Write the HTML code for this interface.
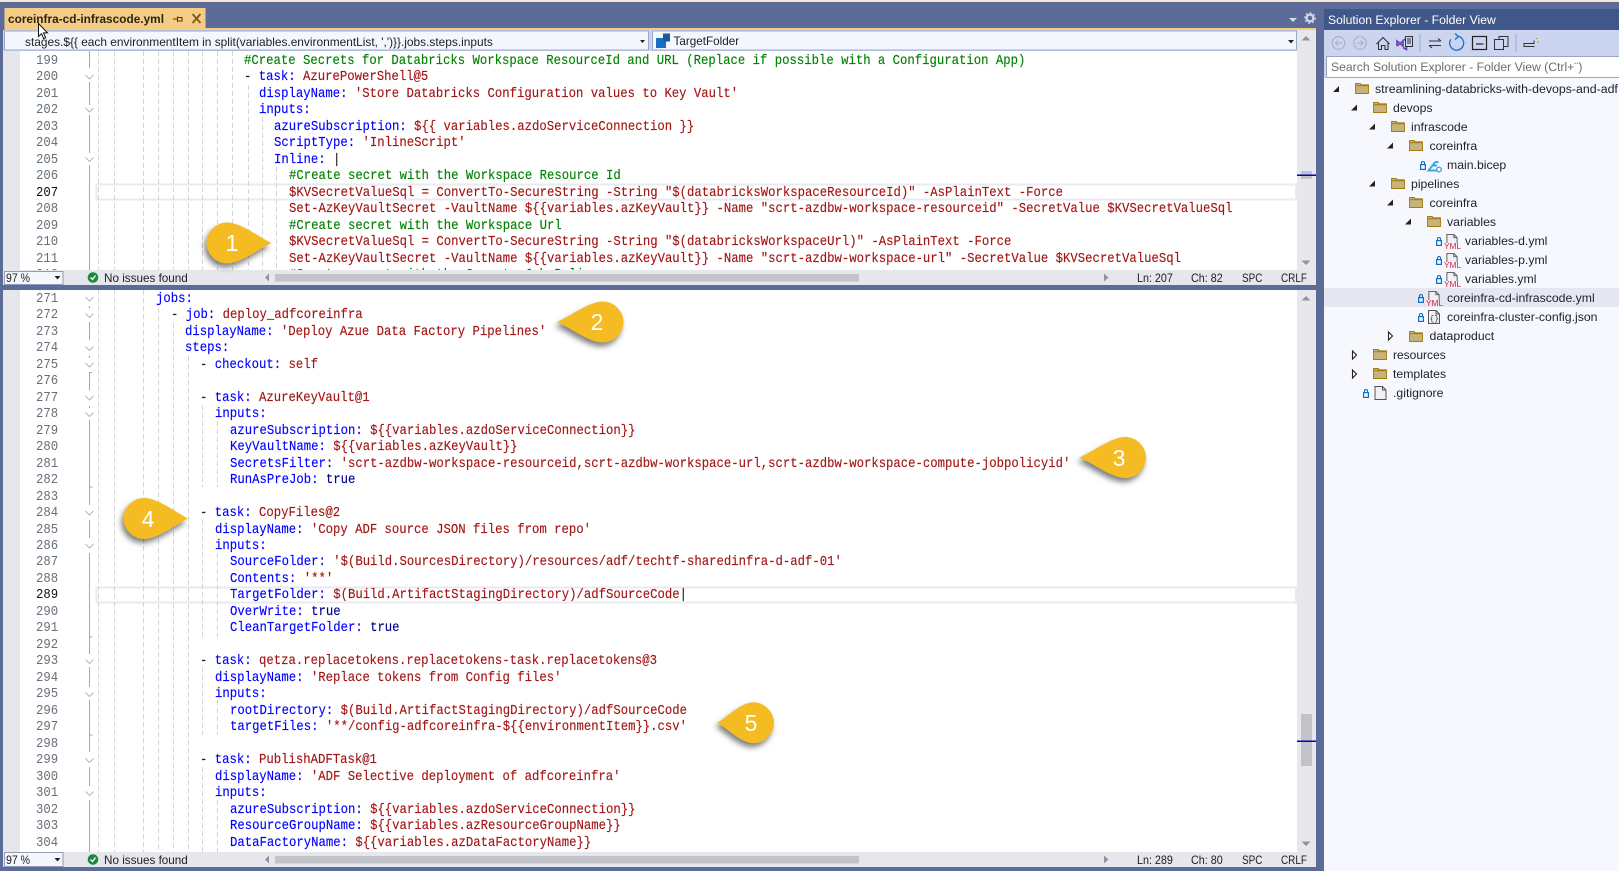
<!DOCTYPE html>
<html><head><meta charset="utf-8"><title>coreinfra-cd-infrascode.yml</title>
<style>
html,body{margin:0;padding:0}
body{width:1619px;height:871px;overflow:hidden;position:relative;background:#5D6B99;font-family:"Liberation Sans",sans-serif;color:#1e1e1e}
div,span.a{position:absolute}
.t{position:absolute;white-space:pre;font-size:12px;line-height:16px}
.st{font-size:11.7px;transform-origin:0 0;z-index:1}
.pane{position:absolute;left:0;width:1297px;overflow:hidden}
.l,.n{position:absolute;white-space:pre;font:14px/16px "Liberation Mono",monospace;top:calc(var(--b) + var(--n)*16.48px);-webkit-text-stroke:.15px}
.l{transform:scaleX(.8774);transform-origin:0 0}
.n{left:36.4px;color:#66707a;transform:scaleX(.8774);transform-origin:0 0;-webkit-text-stroke:0}
.k{color:#0000ff}.v{color:#a31515}.g{color:#008000}.d{color:#222}.b{color:#00008b}
.c0{left:156px}.c1{left:170.7px}.c2{left:185.4px}.c3{left:200.2px}.c4{left:214.9px}.c5{left:229.6px}.c6{left:244.3px}.c7{left:259.1px}.c8{left:273.8px}.c9{left:288.5px}
.ts{font-size:12.25px;color:#1e1e2e}
.y{position:absolute;font:8.3px/7px "Liberation Sans",sans-serif;color:#cf2342;background:#f6f8fe;padding:0 .5px;z-index:2}
.lb{position:absolute;color:#fff;font:23px/24px "Liberation Sans",sans-serif;width:24px;text-align:center}
svg{position:absolute;left:0;top:0;overflow:visible}
</style></head><body>
<svg width="1619" height="871" viewBox="0 0 1619 871" style="z-index:0">
<defs>
<symbol id="fo" viewBox="0 0 15 12" overflow="visible"><path d="M.5 11.5V.5h5l1.200 1.500h7.800v9.500z" fill="#c9b37c" stroke="#9b7400"/><path d="M1 3h13" stroke="#9b7400" stroke-width="1"/></symbol>
<symbol id="lk" viewBox="0 0 6 9" overflow="visible"><rect x=".6" y="3.600" width="4.800" height="4.800" fill="none" stroke="#0a6fc9" stroke-width="1.200"/><path d="M1.500 3.500V2a1.500 1.500 0 0 1 3 0v1.500" fill="none" stroke="#0a6fc9" stroke-width="1.100"/></symbol>
<symbol id="dc" viewBox="0 0 12 14" overflow="visible"><path d="M.5.5h7.500l3.500 3.500v9.500H.5z" fill="#f1f1f5" stroke="#555"/><path d="M8 .5v3.500h3.500" fill="none" stroke="#555"/></symbol>
</defs>
<!-- top strip -->
<rect x="0" y="0" width="1619" height="2" fill="#f6e9cf"/>
<!-- tab -->
<rect x="4.500" y="8" width="201" height="20" fill="#f5cc84"/>
<rect x="4.500" y="28" width="1311.500" height="2" fill="#f5cc84"/>
<path d="M173 19h4M177.500 16.500v5.500M177.500 17.500h4.500v3.500h-4.500" fill="none" stroke="#5a3a10" stroke-width="1.100"/>
<path d="M192.500 14l8 9M200.500 14l-8 9" stroke="#7a5a20" stroke-width="1.800"/>
<path d="M1289 18h8l-4 4z" fill="#d5d9e8"/>
<!-- gear -->
<circle cx="1310" cy="18" r="3.400" fill="none" stroke="#d5d9e8" stroke-width="2.200"/>
<circle cx="1310" cy="18" r="5.200" fill="none" stroke="#d5d9e8" stroke-width="1.400" stroke-dasharray="1.800 2.200"/>
<!-- navigation bar -->
<rect x="3" y="30" width="1313" height="21" fill="#ccd5f0"/>
<rect x="4.500" y="31" width="644" height="19" fill="#f5f7fe" stroke="#9aa8c8"/>
<rect x="652.500" y="31" width="644" height="19" fill="#f5f7fe" stroke="#9aa8c8"/>
<path d="M640 40h5l-2.500 3z" fill="#222"/>
<path d="M1288 40h6l-3 3.500z" fill="#222"/>
<rect x="656" y="38" width="10" height="10" fill="#1a6fc4"/><rect x="663" y="33.500" width="7" height="8" fill="#1a5a9e"/>
<!-- editor bodies -->
<rect x="3" y="51" width="17" height="219" fill="#e6e7ed"/>
<rect x="20" y="51" width="1277" height="219" fill="#fff"/>
<rect x="3" y="290" width="17" height="562" fill="#e6e7ed"/>
<rect x="20" y="290" width="1277" height="562" fill="#fff"/>
<!-- scrollbars -->
<rect x="1297" y="30" width="19" height="240" fill="#e8e8ec"/>
<rect x="1297" y="290" width="19" height="562" fill="#e8e8ec"/>
<rect x="1301" y="171" width="11" height="8" fill="#c2c3c9"/>
<rect x="1297" y="174.500" width="19" height="1.500" fill="#0000c8"/>
<rect x="1301" y="714" width="11" height="52" fill="#c2c3c9"/>
<rect x="1297" y="740.500" width="19" height="1.500" fill="#0000c8"/>
<path d="M1306 36l4.500 4.500h-9z M1306 265l4.500-4.500h-9z M1306 296l4.500 4.500h-9z M1306 846l4.500-4.500h-9z" fill="#8f93a3"/>
<!-- current line -->
<rect x="96.500" y="184.500" width="1199.500" height="15" fill="#fff" stroke="#eaeaf2" stroke-width="2"/>
<rect x="96.500" y="587.500" width="1199.500" height="15" fill="#fff" stroke="#eaeaf2" stroke-width="2"/>
<!-- gutter lines -->
<g stroke="#a8a8a8" stroke-width="1" fill="none">
<path d="M89.500 51v17M89.500 82v23M89.500 115v38M89.500 165v105"/>
<path d="M89.500 322v18M92 372.500h-2.500v18M89.500 420v67h3M89.500 487v18M89.500 520v18M89.500 553v84h3M89.500 637v17M89.500 667v20M89.500 700v35h3M89.500 735v17M89.500 767v19M89.500 800v52"/>
<path d="M89.500 306v2M89.500 356v2M89.500 406v2"/>
</g>
<g stroke="#b8b8b8" stroke-width="1" fill="none">
<path d="M85.500 75l4 4 4-4M85.500 108l4 4 4-4M85.500 157.500l4 4 4-4"/>
<path d="M85.500 297l4 4 4-4M85.500 313.500l4 4 4-4M85.500 346.500l4 4 4-4M85.500 363l4 4 4-4M85.500 396l4 4 4-4M85.500 412.500l4 4 4-4M85.500 511l4 4 4-4M85.500 544l4 4 4-4M85.500 659.500l4 4 4-4M85.500 692.500l4 4 4-4M85.500 758.500l4 4 4-4M85.500 791.500l4 4 4-4"/>
</g>
<!-- indent guides -->
<g stroke="#d4d4d4" stroke-width="1" fill="none" stroke-dasharray="5 3">
<path d="M98.500 51v219M114.500 51v219M143.500 51v219M158.500 51v219M173.500 51v219M188.500 51v219M202.500 51v219M217.500 51v219M232.500 51v219M248.500 85v185M262.500 117v153M276.500 167v103"/>
<path d="M98.500 290v562M114.500 290v562M143.500 290v562M158.500 308v544M173.500 323v529M188.500 356v496M202.500 405v82M202.500 520v117M202.500 667v68M202.500 767v85M217.500 421v66M217.500 553v84M217.500 700v35M217.500 800v52"/>
</g>
<!-- status bars -->
<rect x="3" y="270" width="1313" height="15" fill="#e6e7ed"/>
<rect x="3" y="852" width="1313" height="15" fill="#e6e7ed"/>
<rect x="4.500" y="271.500" width="58.500" height="13" fill="#f6f7fc" stroke="#8f9db8"/>
<rect x="4.500" y="852.500" width="58.500" height="14" fill="#f6f7fc" stroke="#8f9db8"/>
<path d="M54.500 276h6l-3 3.500zM54.500 858h6l-3 3.500z" fill="#222"/>
<circle cx="93" cy="277.500" r="5.300" fill="#1c8a3c"/><circle cx="93" cy="859.500" r="5.300" fill="#1c8a3c"/>
<path d="M90.500 277.500l2 2 3-4M90.500 859.500l2 2 3-4" fill="none" stroke="#fff" stroke-width="1.300"/>
<path d="M269 273.500v8l-4-4zM269 855.500v8l-4-4zM1104 273.500v8l4.500-4zM1104 855.500v8l4.500-4z" fill="#8f93a3"/>
<rect x="275" y="274" width="584" height="7.500" fill="#c2c3c9"/>
<rect x="275" y="856" width="584" height="7.500" fill="#c2c3c9"/>
<!-- solution explorer -->
<rect x="1324" y="9" width="295" height="21" fill="#40578a"/>
<rect x="1324" y="30" width="295" height="48" fill="#ccd5f0"/>
<rect x="1324" y="78" width="295" height="793" fill="#f6f8fe"/>
<rect x="1326.500" y="56.500" width="293" height="21" fill="#fff" stroke="#9ca5bd"/>
<rect x="1324" y="288" width="295" height="19" fill="#e6e7f0"/>
<!-- toolbar icons -->
<g fill="none" stroke="#a9b0c4" stroke-width="1.100">
<circle cx="1338.500" cy="43" r="6.300"/><path d="M1342 43h-6.500m2.500-2.500l-2.500 2.500 2.500 2.500"/>
<circle cx="1360" cy="43" r="6.300"/><path d="M1356.500 43h6.500m-2.500-2.500l2.500 2.500-2.500 2.500"/>
</g>
<path d="M1376.500 44l6.500-6.500 6.500 6.500M1378.500 42.500v7h3v-4h3.500v4h3v-7" fill="none" stroke="#333" stroke-width="1.100"/>
<path d="M1397 46.500l3-2.500 3 2.500v-5l-3 2.500-3-2.500v5M1403 41l3.500-2v11l-3.500-2" fill="none" stroke="#6a3fb5" stroke-width="1.600" transform="translate(0,-.5)"/>
<rect x="1405.500" y="36.500" width="7" height="10" fill="#ccd5f0" stroke="#333"/><path d="M1407 39h4M1407 41h4M1407 43h4" stroke="#333"/>
<path d="M1420 34v18M1516 34v18" stroke="#a0a9c4"/>
<path d="M1429 41h12m-3-2.500l3 2.500M1441 45.500h-12m3 2.500l-3-2.500" fill="none" stroke="#333" stroke-width="1.100"/>
<path d="M1450.800 39.300A7 7 0 1 0 1459 36.500M1455 33.500l3.500 3-3.500 3" fill="none" stroke="#1a6fc4" stroke-width="1.300"/>
<rect x="1472.500" y="36.500" width="14" height="13" fill="none" stroke="#222" stroke-width="1.200"/><path d="M1476 44h7.500" stroke="#222" stroke-width="1.200"/>
<rect x="1499" y="36.500" width="9" height="10" fill="#ccd5f0" stroke="#333"/><rect x="1494.500" y="39.500" width="9" height="10" fill="#ccd5f0" stroke="#333"/>
<path d="M1523.500 46.500h11M1524 46.500v-3h10v-3" fill="none" stroke="#333"/><path d="M1536 39l1-1M1537 42h1.500" stroke="#b08a20"/>
<!-- tree expanders -->
<g fill="#222">
<path d="M1339 86v6h-6zM1357 104.500v6h-6zM1375 123.500v6h-6zM1393 142.500v6h-6zM1375 180.500v6h-6zM1393 199.500v6h-6zM1411 218.500v6h-6z"/>
</g>
<g fill="#fff" stroke="#222">
<path d="M1388.500 332v8l4 -4zM1352.500 351v8l4-4zM1352.500 370v8l4-4z" stroke-width="1.100"/>
</g>
<!-- folders -->
<use href="#fo" x="1355" y="83" width="14" height="11"/>
<use href="#fo" x="1373" y="102" width="14" height="11"/>
<use href="#fo" x="1391" y="121" width="14" height="11"/>
<use href="#fo" x="1409" y="140" width="14" height="11"/>
<use href="#fo" x="1391" y="178" width="14" height="11"/>
<use href="#fo" x="1409" y="197" width="14" height="11"/>
<use href="#fo" x="1427" y="216" width="14" height="11"/>
<use href="#fo" x="1409" y="331" width="14" height="11"/>
<use href="#fo" x="1373" y="349" width="14" height="11"/>
<use href="#fo" x="1373" y="368" width="14" height="11"/>
<!-- locks -->
<use href="#lk" x="1420" y="161" width="6" height="9"/>
<use href="#lk" x="1436" y="237" width="6" height="9"/>
<use href="#lk" x="1436" y="256" width="6" height="9"/>
<use href="#lk" x="1436" y="275" width="6" height="9"/>
<use href="#lk" x="1418" y="294" width="6" height="9"/>
<use href="#lk" x="1418" y="313" width="6" height="9"/>
<use href="#lk" x="1363" y="389" width="6" height="9"/>
<!-- bicep icon -->
<path d="M1438.500 162.500c-3-1.500-4.500 .5-5.500 2.500l-4.500 5.500h8M1432.500 165.500h4.500" fill="none" stroke="#3aa8de" stroke-width="2"/><circle cx="1439" cy="169.500" r="2.300" fill="#f6f8fe" stroke="#3aa8de" stroke-width="1.400"/>
<!-- doc icons -->
<use href="#dc" x="1446" y="234" width="12" height="13"/>
<use href="#dc" x="1446" y="253" width="12" height="13"/>
<use href="#dc" x="1446" y="272" width="12" height="13"/>
<use href="#dc" x="1428" y="291" width="12" height="13"/>
<use href="#dc" x="1428" y="310" width="12" height="14"/>
<use href="#dc" x="1374.500" y="386" width="12" height="14"/>
<text x="1429.500" y="321" font-family="Liberation Mono" font-size="8" fill="#444">{}</text>
</svg>

<div class="t" style="left:8px;top:11px;font-size:11.85px;font-weight:bold;color:#2a2418;z-index:1">coreinfra-cd-infrascode.yml</div>
<div class="t" style="left:25px;top:33.5px;font-size:11.9px;z-index:1">stages.${{ each environmentItem in split(variables.environmentList, ',')}}.jobs.steps.inputs</div>
<div class="t" style="left:673.5px;top:33.5px;font-size:11.7px;z-index:1">TargetFolder</div>

<div class="pane" style="top:51px;height:219px;--b:2px;z-index:1">
<span class="n" style="--n:0">199</span><span class="n" style="--n:1">200</span><span class="n" style="--n:2">201</span><span class="n" style="--n:3">202</span><span class="n" style="--n:4">203</span><span class="n" style="--n:5">204</span><span class="n" style="--n:6">205</span><span class="n" style="--n:7">206</span><span class="n" style="--n:8;color:#111">207</span><span class="n" style="--n:9">208</span><span class="n" style="--n:10">209</span><span class="n" style="--n:11">210</span><span class="n" style="--n:12">211</span><span class="n" style="--n:13">212</span>
<span class="l c6 g" style="--n:0">#Create Secrets for Databricks Workspace ResourceId and URL (Replace if possible with a Configuration App)</span>
<span class="l c6" style="--n:1"><span class="d">- </span><span class="k">task:</span> <span class="v">AzurePowerShell@5</span></span>
<span class="l c7" style="--n:2"><span class="k">displayName:</span> <span class="v">'Store Databricks Configuration values to Key Vault'</span></span>
<span class="l c7" style="--n:3"><span class="k">inputs:</span></span>
<span class="l c8" style="--n:4"><span class="k">azureSubscription:</span> <span class="v">${{ variables.azdoServiceConnection }}</span></span>
<span class="l c8" style="--n:5"><span class="k">ScriptType:</span> <span class="v">'InlineScript'</span></span>
<span class="l c8" style="--n:6"><span class="k">Inline:</span> <span class="d">|</span></span>
<span class="l c9 g" style="--n:7">#Create secret with the Workspace Resource Id</span>
<span class="l c9 v" style="--n:8">$KVSecretValueSql = ConvertTo-SecureString -String "$(databricksWorkspaceResourceId)" -AsPlainText -Force</span>
<span class="l c9 v" style="--n:9">Set-AzKeyVaultSecret -VaultName ${{variables.azKeyVault}} -Name "scrt-azdbw-workspace-resourceid" -SecretValue $KVSecretValueSql</span>
<span class="l c9 g" style="--n:10">#Create secret with the Workspace Url</span>
<span class="l c9 v" style="--n:11">$KVSecretValueSql = ConvertTo-SecureString -String "$(databricksWorkspaceUrl)" -AsPlainText -Force</span>
<span class="l c9 v" style="--n:12">Set-AzKeyVaultSecret -VaultName ${{variables.azKeyVault}} -Name "scrt-azdbw-workspace-url" -SecretValue $KVSecretValueSql</span>
<span class="l c9 g" style="--n:13">#Create secret with the Compute Job Policy</span>
</div>

<div class="pane" style="top:290px;height:562px;--b:.8px;z-index:1">
<span class="n" style="--n:0">271</span><span class="n" style="--n:1">272</span><span class="n" style="--n:2">273</span><span class="n" style="--n:3">274</span><span class="n" style="--n:4">275</span><span class="n" style="--n:5">276</span><span class="n" style="--n:6">277</span><span class="n" style="--n:7">278</span><span class="n" style="--n:8">279</span><span class="n" style="--n:9">280</span><span class="n" style="--n:10">281</span><span class="n" style="--n:11">282</span><span class="n" style="--n:12">283</span><span class="n" style="--n:13">284</span><span class="n" style="--n:14">285</span><span class="n" style="--n:15">286</span><span class="n" style="--n:16">287</span><span class="n" style="--n:17">288</span><span class="n" style="--n:18;color:#111">289</span><span class="n" style="--n:19">290</span><span class="n" style="--n:20">291</span><span class="n" style="--n:21">292</span><span class="n" style="--n:22">293</span><span class="n" style="--n:23">294</span><span class="n" style="--n:24">295</span><span class="n" style="--n:25">296</span><span class="n" style="--n:26">297</span><span class="n" style="--n:27">298</span><span class="n" style="--n:28">299</span><span class="n" style="--n:29">300</span><span class="n" style="--n:30">301</span><span class="n" style="--n:31">302</span><span class="n" style="--n:32">303</span><span class="n" style="--n:33">304</span>
<span class="l c0" style="--n:0"><span class="k">jobs:</span></span>
<span class="l c1" style="--n:1"><span class="d">- </span><span class="k">job:</span> <span class="v">deploy_adfcoreinfra</span></span>
<span class="l c2" style="--n:2"><span class="k">displayName:</span> <span class="v">'Deploy Azue Data Factory Pipelines'</span></span>
<span class="l c2" style="--n:3"><span class="k">steps:</span></span>
<span class="l c3" style="--n:4"><span class="d">- </span><span class="k">checkout:</span> <span class="v">self</span></span>
<span class="l c3" style="--n:6"><span class="d">- </span><span class="k">task:</span> <span class="v">AzureKeyVault@1</span></span>
<span class="l c4" style="--n:7"><span class="k">inputs:</span></span>
<span class="l c5" style="--n:8"><span class="k">azureSubscription:</span> <span class="v">${{variables.azdoServiceConnection}}</span></span>
<span class="l c5" style="--n:9"><span class="k">KeyVaultName:</span> <span class="v">${{variables.azKeyVault}}</span></span>
<span class="l c5" style="--n:10"><span class="k">SecretsFilter:</span> <span class="v">'scrt-azdbw-workspace-resourceid,scrt-azdbw-workspace-url,scrt-azdbw-workspace-compute-jobpolicyid'</span></span>
<span class="l c5" style="--n:11"><span class="k">RunAsPreJob:</span> <span class="b">true</span></span>
<span class="l c3" style="--n:13"><span class="d">- </span><span class="k">task:</span> <span class="v">CopyFiles@2</span></span>
<span class="l c4" style="--n:14"><span class="k">displayName:</span> <span class="v">'Copy ADF source JSON files from repo'</span></span>
<span class="l c4" style="--n:15"><span class="k">inputs:</span></span>
<span class="l c5" style="--n:16"><span class="k">SourceFolder:</span> <span class="v">'$(Build.SourcesDirectory)/resources/adf/techtf-sharedinfra-d-adf-01'</span></span>
<span class="l c5" style="--n:17"><span class="k">Contents:</span> <span class="v">'**'</span></span>
<span class="l c5" style="--n:18"><span class="k">TargetFolder:</span> <span class="v">$(Build.ArtifactStagingDirectory)/adfSourceCode</span><span class="d">|</span></span>
<span class="l c5" style="--n:19"><span class="k">OverWrite:</span> <span class="b">true</span></span>
<span class="l c5" style="--n:20"><span class="k">CleanTargetFolder:</span> <span class="b">true</span></span>
<span class="l c3" style="--n:22"><span class="d">- </span><span class="k">task:</span> <span class="v">qetza.replacetokens.replacetokens-task.replacetokens@3</span></span>
<span class="l c4" style="--n:23"><span class="k">displayName:</span> <span class="v">'Replace tokens from Config files'</span></span>
<span class="l c4" style="--n:24"><span class="k">inputs:</span></span>
<span class="l c5" style="--n:25"><span class="k">rootDirectory:</span> <span class="v">$(Build.ArtifactStagingDirectory)/adfSourceCode</span></span>
<span class="l c5" style="--n:26"><span class="k">targetFiles:</span> <span class="v">'**/config-adfcoreinfra-${{environmentItem}}.csv'</span></span>
<span class="l c3" style="--n:28"><span class="d">- </span><span class="k">task:</span> <span class="v">PublishADFTask@1</span></span>
<span class="l c4" style="--n:29"><span class="k">displayName:</span> <span class="v">'ADF Selective deployment of adfcoreinfra'</span></span>
<span class="l c4" style="--n:30"><span class="k">inputs:</span></span>
<span class="l c5" style="--n:31"><span class="k">azureSubscription:</span> <span class="v">${{variables.azdoServiceConnection}}</span></span>
<span class="l c5" style="--n:32"><span class="k">ResourceGroupName:</span> <span class="v">${{variables.azResourceGroupName}}</span></span>
<span class="l c5" style="--n:33"><span class="k">DataFactoryName:</span> <span class="v">${{variables.azDataFactoryName}}</span></span>
</div>

<!-- status text -->
<div class="t st" style="left:6px;top:271px;transform:scaleX(.9)">97 %</div>
<div class="t st" style="left:104px;top:271px">No issues found</div>
<div class="t st" style="left:1137px;top:271px;transform:scaleX(.92)">Ln: 207</div>
<div class="t st" style="left:1191px;top:271px;transform:scaleX(.92)">Ch: 82</div>
<div class="t st" style="left:1242px;top:271px;transform:scaleX(.85)">SPC</div>
<div class="t st" style="left:1281px;top:271px;transform:scaleX(.85)">CRLF</div>
<div class="t st" style="left:6px;top:853px;transform:scaleX(.9)">97 %</div>
<div class="t st" style="left:104px;top:853px">No issues found</div>
<div class="t st" style="left:1137px;top:853px;transform:scaleX(.92)">Ln: 289</div>
<div class="t st" style="left:1191px;top:853px;transform:scaleX(.92)">Ch: 80</div>
<div class="t st" style="left:1242px;top:853px;transform:scaleX(.85)">SPC</div>
<div class="t st" style="left:1281px;top:853px;transform:scaleX(.85)">CRLF</div>

<!-- explorer text -->
<div class="t" style="left:1328px;top:12px;font-size:12.2px;color:#fff;z-index:1">Solution Explorer - Folder View</div>
<div class="t" style="left:1331px;top:59px;font-size:12.2px;color:#6d6d6d;z-index:1">Search Solution Explorer - Folder View (Ctrl+¨)</div>
<div class="t ts" style="left:1375px;top:81px;font-size:12.35px;z-index:1">streamlining-databricks-with-devops-and-adf</div>
<div class="t ts" style="left:1393px;top:100px;z-index:1">devops</div>
<div class="t ts" style="left:1411px;top:119px;z-index:1">infrascode</div>
<div class="t ts" style="left:1429.5px;top:138px;z-index:1">coreinfra</div>
<div class="t ts" style="left:1447px;top:157px;z-index:1">main.bicep</div>
<div class="t ts" style="left:1411px;top:176px;z-index:1">pipelines</div>
<div class="t ts" style="left:1429.5px;top:195px;z-index:1">coreinfra</div>
<div class="t ts" style="left:1447px;top:214px;z-index:1">variables</div>
<div class="t ts" style="left:1465px;top:233px;z-index:1">variables-d.yml</div>
<div class="t ts" style="left:1465px;top:252px;z-index:1">variables-p.yml</div>
<div class="t ts" style="left:1465px;top:271px;z-index:1">variables.yml</div>
<div class="t ts" style="left:1447px;top:290px;z-index:1">coreinfra-cd-infrascode.yml</div>
<div class="t ts" style="left:1447px;top:309px;z-index:1">coreinfra-cluster-config.json</div>
<div class="t ts" style="left:1429.5px;top:328px;z-index:1">dataproduct</div>
<div class="t ts" style="left:1393px;top:347px;font-size:12px;z-index:1">resources</div>
<div class="t ts" style="left:1393px;top:366px;z-index:1">templates</div>
<div class="t ts" style="left:1393px;top:385px;z-index:1">.gitignore</div>
<!-- YML badges -->
<div class="y" style="left:1443.5px;top:243px">YML</div>
<div class="y" style="left:1443.5px;top:262px">YML</div>
<div class="y" style="left:1443.5px;top:281px">YML</div>
<div class="y" style="left:1425.5px;top:300px;background:#e6e7f0">YML</div>

<!-- callouts -->
<svg width="1619" height="871" viewBox="0 0 1619 871" style="z-index:3;filter:drop-shadow(-2px 4px 3px rgba(0,0,0,.5))">
<g fill="#f4bc22">
<path transform="translate(227,243)" d="M44.500 0C32 6 14 20.500 0 20.500-11 20.500-20.500 11-20.500 0-20.500-11-11-20.500 0-20.500 14-20.500 32-6 44.500 0Z"/>
<path transform="translate(603,322)" d="M-46 0C-32-6-14-20.500 0-20.500 11-20.500 20.500-11 20.500 0 20.500 11 11 20.500 0 20.500-14 20.500-32 6-46 0Z"/>
<path transform="translate(1125.500,457.500)" d="M-46 0C-32-6-14-20.500 0-20.500 11-20.500 20.500-11 20.500 0 20.500 11 11 20.500 0 20.500-14 20.500-32 6-46 0Z"/>
<path transform="translate(144,518.500)" d="M44 0C32 6 14 20.500 0 20.500-11 20.500-20.500 11-20.500 0-20.500-11-11-20.500 0-20.500 14-20.500 32-6 44 0Z"/>
<path transform="translate(753.500,722.800)" d="M-36 0C-26-6-12-20.500 0-20.500 11-20.500 20.500-11 20.500 0 20.500 11 11 20.500 0 20.500-12 20.500-26 6-36 0Z"/>
</g>
</svg>
<div class="lb" style="left:220px;top:231px;z-index:4">1</div>
<div class="lb" style="left:585px;top:310px;z-index:4">2</div>
<div class="lb" style="left:1107px;top:446px;z-index:4">3</div>
<div class="lb" style="left:136px;top:507px;z-index:4">4</div>
<div class="lb" style="left:739px;top:711px;z-index:4">5</div>

<!-- mouse cursor -->
<svg width="1619" height="871" viewBox="0 0 1619 871" style="z-index:5"><path d="M38.500 23.500v13l3-2.800 2.200 5 2-1-2.200-4.800h4z" fill="#fff" stroke="#111" stroke-width="1"/></svg>
</body></html>
